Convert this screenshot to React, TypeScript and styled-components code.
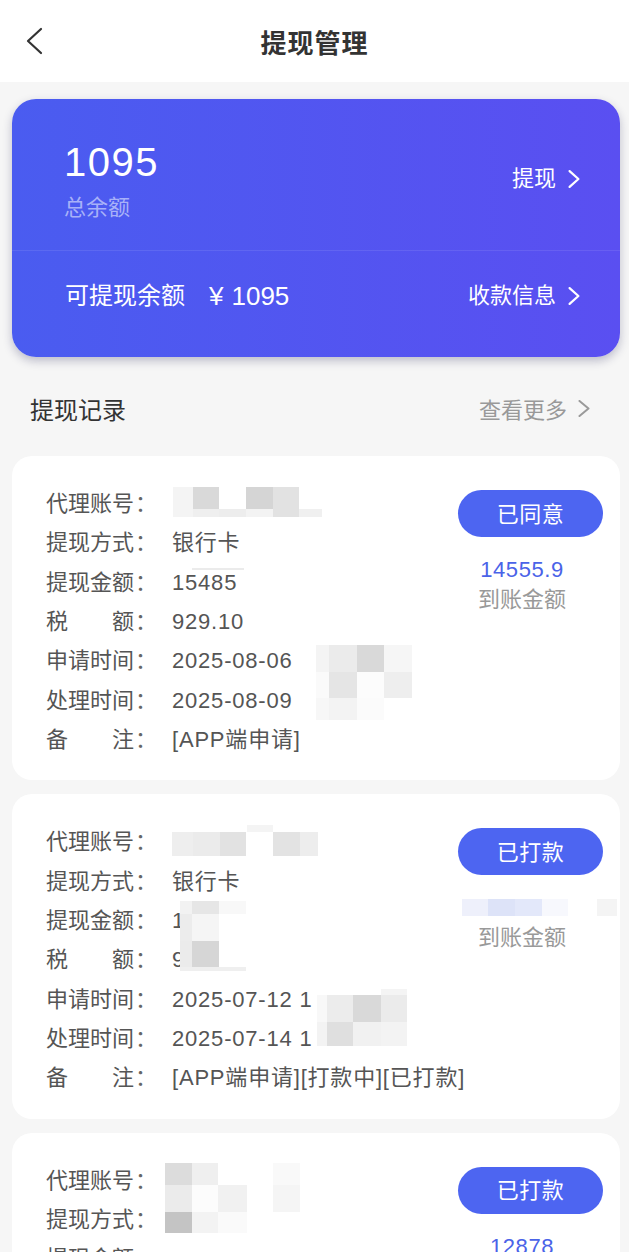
import React from 'react';
import styled, { createGlobalStyle } from 'styled-components';

const GlobalStyle = createGlobalStyle`
  html, body {
    margin: 0;
    padding: 0;
    overflow: hidden;
    background: #f6f6f6;
    font-family: "Liberation Sans", "Noto Sans CJK SC", sans-serif;
  }
  * { box-sizing: border-box; }
`;

const Page = styled.div`
  width: 629px;
  min-height: 1252px;
  background: #f6f6f6;
`;

const Header = styled.header`
  height: 82px;
  background: #ffffff;
  display: grid;
  grid-template-columns: 80px 1fr 80px;
  align-items: center;
`;

const BackButton = styled.button`
  border: none;
  background: none;
  padding: 0 0 0 26px;
  height: 40px;
  display: flex;
  align-items: center;
  cursor: pointer;
`;

const Title = styled.h1`
  margin: 0;
  text-align: center;
  font-size: 26px;
  font-weight: 700;
  color: #333333;
  letter-spacing: 1px;
`;

const Main = styled.main`
  padding: 17px 9px 0 12px;
`;

const BalanceCard = styled.section`
  height: 258px;
  border-radius: 24px;
  background: linear-gradient(90deg, #4a5cf0 0%, #5a4ff1 100%);
  box-shadow: 0 4px 10px rgba(40, 40, 90, 0.28);
  color: #ffffff;
  display: flex;
  flex-direction: column;
`;

const BalanceTop = styled.div`
  height: 152px;
  padding: 40px 40px 0 52px;
  display: flex;
  justify-content: space-between;
  align-items: flex-start;
  border-bottom: 1px solid rgba(255, 255, 255, 0.09);
`;

const TotalBlock = styled.div`
  display: flex;
  flex-direction: column;
`;

const TotalAmount = styled.div`
  font-size: 40px;
  line-height: 46px;
  letter-spacing: 1.5px;
`;

const TotalLabel = styled.div`
  font-size: 22px;
  line-height: 30px;
  margin-top: 8px;
  color: #a8b1f8;
`;

const LinkAction = styled.a<{ $offset?: number }>`
  display: flex;
  align-items: center;
  gap: 12px;
  font-size: 22px;
  line-height: 30px;
  color: #ffffff;
  text-decoration: none;
  margin-top: ${(p) => p.$offset ?? 0}px;
`;

const BalanceBottom = styled.div`
  flex: 1;
  padding: 0 40px 16px 53px;
  display: flex;
  justify-content: space-between;
  align-items: center;
`;

const Available = styled.div`
  font-size: 24px;
  line-height: 32px;
  display: flex;
  align-items: center;
  gap: 24px;
`;

const AvailableAmount = styled.span`
  font-size: 26px;
`;

const Yen = styled.span`
  margin-right: 8px;
`;

const SectionHeader = styled.div`
  height: 99px;
  padding: 3px 30px 0 18px;
  display: flex;
  justify-content: space-between;
  align-items: center;
`;

const SectionTitle = styled.h2`
  margin: 0;
  font-size: 24px;
  font-weight: 400;
  color: #333333;
`;

const MoreLink = styled.a`
  display: flex;
  align-items: center;
  gap: 11px;
  font-size: 22px;
  color: #999999;
  text-decoration: none;
`;

const RecordList = styled.div`
  display: flex;
  flex-direction: column;
  gap: 14px;
`;

const RecordCard = styled.article`
  position: relative;
  background: #ffffff;
  border-radius: 20px;
  padding: 28px 17px 21px 34px;
  display: flex;
  justify-content: space-between;
  align-items: flex-start;
`;

const InfoList = styled.div`
  flex: 1;
  min-width: 0;
  display: flex;
  flex-direction: column;
`;

const InfoRow = styled.div`
  display: flex;
  font-size: 22px;
  line-height: 39.33px;
  height: 39.33px;
  color: #555555;
  white-space: nowrap;
`;

const Label = styled.span`
  width: 126px;
  display: flex;
  flex-shrink: 0;
`;

const LabelText = styled.span`
  display: inline-block;
  width: 88px;
  text-align: justify;
  text-align-last: justify;
`;

const Colon = styled.span`
  color: #666666;
  margin-left: 1px;
`;

const Value = styled.span`
  letter-spacing: 0.8px;
`;

const SideColumn = styled.div`
  width: 145px;
  flex-shrink: 0;
  padding-top: 6px;
  display: flex;
  flex-direction: column;
`;

const StatusButton = styled.button`
  height: 47px;
  border: none;
  border-radius: 24px;
  background: #4d65f1;
  color: #ffffff;
  font-family: inherit;
  font-size: 22px;
  letter-spacing: 0.5px;
  padding: 0 0 4px;
  cursor: pointer;
`;

const Received = styled.div`
  margin-top: 18px;
  padding-right: 17px;
  display: flex;
  flex-direction: column;
  align-items: center;
`;

const ReceivedAmount = styled.div`
  font-size: 22px;
  line-height: 30px;
  height: 30px;
  color: #4a63e8;
  letter-spacing: 0.6px;
`;

const ReceivedLabel = styled.div`
  font-size: 22px;
  line-height: 30px;
  color: #999999;
`;

const MosaicLayer = styled.svg`
  position: absolute;
  left: 0;
  top: 0;
  overflow: visible;
  pointer-events: none;
`;

const Chevron = ({ color, w = 12, h = 18, sw = 2.2 }: { color: string; w?: number; h?: number; sw?: number }) => (
  <svg width={w} height={h} viewBox={`0 0 ${w} ${h}`} fill="none">
    <polyline
      points={`${sw / 2 + 0.5},${sw / 2} ${w - sw / 2 - 0.5},${h / 2} ${sw / 2 + 0.5},${h - sw / 2}`}
      stroke={color}
      strokeWidth={sw}
      strokeLinecap="round"
      strokeLinejoin="round"
    />
  </svg>
);

type Rect = [number, number, number, number, string];

interface Record {
  top: number;
  status: string;
  amount: string;
  rows: [string, string][];
  mosaic: Rect[];
}

const records: Record[] = [
  {
    top: 456,
    status: '已同意',
    amount: '14555.9',
    rows: [
      ['代理账号', ''],
      ['提现方式', '银行卡'],
      ['提现金额', '15485'],
      ['税额', '929.10'],
      ['申请时间', '2025-08-06'],
      ['处理时间', '2025-08-09'],
      ['备注', '[APP端申请]'],
    ],
    mosaic: [
      [173, 487, 20, 30, '#f4f4f4'],
      [193, 487, 26, 22, '#d9d9d9'],
      [193, 509, 26, 8, '#efefef'],
      [219, 509, 27, 8, '#ededed'],
      [246, 487, 27, 22, '#d5d5d5'],
      [246, 509, 27, 8, '#f3f3f3'],
      [273, 487, 26, 30, '#e2e2e2'],
      [299, 509, 23, 8, '#f0f0f0'],
      [192, 568, 52, 2, '#ebebeb'],
      [316, 645, 13, 27, '#f4f4f4'],
      [329, 645, 28, 27, '#ebebeb'],
      [357, 645, 27, 27, '#d9d9d9'],
      [384, 645, 28, 27, '#f6f6f6'],
      [316, 672, 13, 26, '#fafafa'],
      [329, 672, 28, 26, '#e5e5e5'],
      [357, 672, 27, 26, '#fcfcfc'],
      [384, 672, 28, 26, '#eeeeee'],
      [316, 698, 13, 22, '#f7f7f7'],
      [329, 698, 28, 22, '#f3f3f3'],
      [357, 698, 27, 22, '#fbfbfb'],
    ],
  },
  {
    top: 795,
    status: '已打款',
    amount: '',
    rows: [
      ['代理账号', ''],
      ['提现方式', '银行卡'],
      ['提现金额', '1'],
      ['税额', '9'],
      ['申请时间', '2025-07-12 1'],
      ['处理时间', '2025-07-14 1'],
      ['备注', '[APP端申请][打款中][已打款]'],
    ],
    mosaic: [
      [247, 826, 26, 7, '#f4f4f4'],
      [172, 833, 21, 24, '#eeeeee'],
      [193, 833, 27, 24, '#ebebeb'],
      [220, 833, 26, 24, '#e2e2e2'],
      [273, 833, 27, 24, '#e3e3e3'],
      [300, 833, 18, 24, '#ededed'],
      [180, 902, 12, 13, '#f2f2f2'],
      [192, 902, 27, 13, '#e6e6e6'],
      [219, 902, 27, 13, '#f8f8f8'],
      [180, 915, 12, 27, '#ececec'],
      [192, 915, 27, 27, '#f5f5f5'],
      [219, 915, 27, 27, '#ffffff'],
      [180, 942, 12, 26, '#ebebeb'],
      [192, 942, 27, 26, '#d6d6d6'],
      [219, 942, 27, 26, '#ffffff'],
      [180, 968, 66, 4, '#efefef'],
      [381, 990, 26, 6, '#f4f4f4'],
      [317, 996, 10, 27, '#f8f8f8'],
      [327, 996, 26, 27, '#ececec'],
      [353, 996, 28, 27, '#d9d9d9'],
      [381, 996, 26, 27, '#ebebeb'],
      [317, 1023, 10, 24, '#f3f3f3'],
      [327, 1023, 26, 24, '#dfdfdf'],
      [353, 1023, 28, 24, '#f1f1f1'],
      [381, 1023, 26, 24, '#f3f3f3'],
      [462, 900, 26, 17, '#eef0fb'],
      [488, 900, 27, 17, '#dde3f8'],
      [515, 900, 27, 17, '#e3e8fa'],
      [542, 900, 26, 17, '#f7f8fd'],
      [597, 900, 20, 17, '#f4f4f4'],
    ],
  },
  {
    top: 1133,
    status: '已打款',
    amount: '12878',
    rows: [
      ['代理账号', ''],
      ['提现方式', ''],
      ['提现金额', ''],
      ['税额', ''],
      ['申请时间', ''],
      ['处理时间', ''],
      ['备注', ''],
    ],
    mosaic: [
      [165, 1163, 27, 22, '#dcdcdc'],
      [192, 1163, 26, 22, '#efefef'],
      [273, 1163, 27, 22, '#f9f9f9'],
      [165, 1185, 27, 27, '#ebebeb'],
      [192, 1185, 26, 27, '#fcfcfc'],
      [218, 1185, 29, 27, '#f1f1f1'],
      [273, 1185, 27, 27, '#f5f5f5'],
      [165, 1212, 27, 21, '#c4c4c4'],
      [192, 1212, 26, 21, '#f3f3f3'],
      [218, 1212, 29, 21, '#fafafa'],
    ],
  },
];

const RecordItem = ({ record }: { record: Record }) => (
  <RecordCard>
    <InfoList>
      {record.rows.map(([label, value]) => (
        <InfoRow key={label}>
          <Label>
            <LabelText>{label}</LabelText>
            <Colon>：</Colon>
          </Label>
          <Value>{value}</Value>
        </InfoRow>
      ))}
    </InfoList>
    <SideColumn>
      <StatusButton>{record.status}</StatusButton>
      <Received>
        <ReceivedAmount>{record.amount}</ReceivedAmount>
        <ReceivedLabel>到账金额</ReceivedLabel>
      </Received>
    </SideColumn>
    <MosaicLayer width={608} height={324}>
      {record.mosaic.map(([x, y, w, h, c], i) => (
        <rect key={i} x={x - 12} y={y - record.top} width={w} height={h} fill={c} />
      ))}
    </MosaicLayer>
  </RecordCard>
);

export default function App() {
  return (
    <Page>
      <GlobalStyle />
      <Header>
        <BackButton aria-label="返回">
          <svg width="18" height="28" viewBox="0 0 18 28" fill="none">
            <polyline points="15,2 2,14 15,26" stroke="#333333" strokeWidth="2.2" strokeLinecap="round" strokeLinejoin="round" />
          </svg>
        </BackButton>
        <Title>提现管理</Title>
        <div />
      </Header>
      <Main>
        <BalanceCard>
          <BalanceTop>
            <TotalBlock>
              <TotalAmount>1095</TotalAmount>
              <TotalLabel>总余额</TotalLabel>
            </TotalBlock>
            <LinkAction $offset={25}>
              提现
              <Chevron color="#ffffff" />
            </LinkAction>
          </BalanceTop>
          <BalanceBottom>
            <Available>
              <span>可提现余额</span>
              <AvailableAmount>
                <Yen>¥</Yen>1095
              </AvailableAmount>
            </Available>
            <LinkAction>
              收款信息
              <Chevron color="#ffffff" />
            </LinkAction>
          </BalanceBottom>
        </BalanceCard>
        <SectionHeader>
          <SectionTitle>提现记录</SectionTitle>
          <MoreLink>
            查看更多
            <Chevron color="#9a9a9a" h={17} sw={2} />
          </MoreLink>
        </SectionHeader>
        <RecordList>
          {records.map((r) => (
            <RecordItem key={r.top} record={r} />
          ))}
        </RecordList>
      </Main>
    </Page>
  );
}
